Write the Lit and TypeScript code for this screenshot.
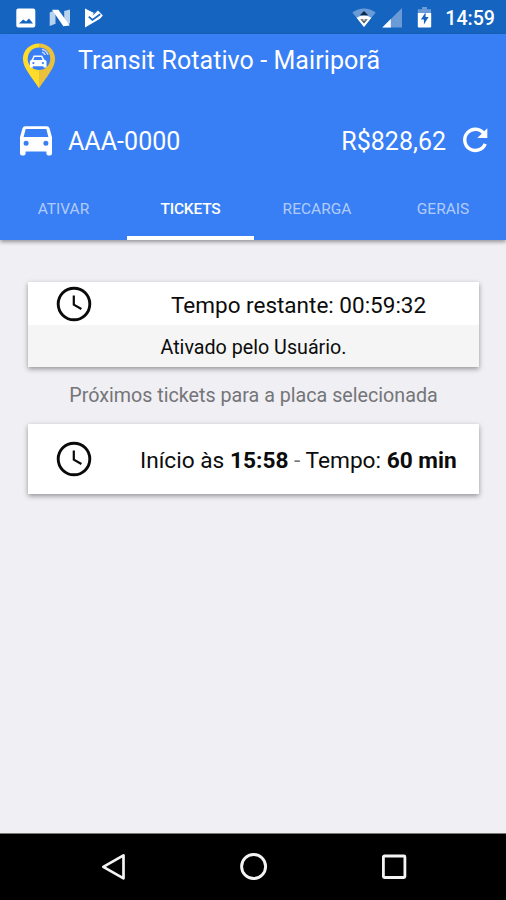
import { LitElement, html, css } from "lit";
import { customElement } from "lit/decorators.js";

const clock = html`<svg class="clock" viewBox="0 0 36 36"><circle cx="18" cy="18" r="15.8" fill="none" stroke="#0a0a0a" stroke-width="2.9"/><path d="M17.8 9.5V18.6L25.4 23" fill="none" stroke="#0a0a0a" stroke-width="2.2"/></svg>`;

const picture = html`<svg width="20" height="20" viewBox="0 0 20 20" fill="#fff"><path fill-rule="evenodd" d="M2.3.4h15a2 2 0 0 1 2 2v15a2 2 0 0 1-2 2h-15a2 2 0 0 1-2-2v-15a2 2 0 0 1 2-2zM3 15.600h14l-4-5.200-3 3.200-2.800-2.200z"/></svg>`;

const nougat = html`<svg width="22" height="18" viewBox="0 0 22 18"><path d="M.7 3.600 6.500 1v13.800L.7 17z" fill="#b9d2ee"/><path d="M15.200 2 21 .6v13.600l-5.800 2.600z" fill="#b9d2ee"/><path d="M3 .8h6.400L20.800 16.400l-6.400.9z" fill="#fff"/></svg>`;

const play = html`<svg width="20" height="20" viewBox="0 0 20 20"><path d="M1 .5 10 5 14 2.500 18.800 7.600 16 10.700 1 19.400z" fill="#fff"/><path d="M10 4.800 8.400 7.800l5.800-5.200z" fill="#1565c0"/><path d="m4.800 8.600 3.600 3.300 7.800-5.600" fill="none" stroke="#1565c0" stroke-width="1.700"/></svg>`;

const wifi = html`<svg width="24" height="20" viewBox="0 0 24 20"><path d="M.3 4.600Q12-3.800 23.700 4.600L12 19z" fill="#6a9bd6"/><path d="M4.600 9.800Q12 5.200 19.400 9.800L12 19z" fill="#fff"/><path d="m12 3 4.200 4.200H7.800z" fill="#12294a"/><path d="M8.300 11.300h7.400L12 15.500z" fill="#4c545e"/><path d="m12 11 1.800 1.600h-3.600z" fill="#fff"/></svg>`;

const signal = html`<svg width="20" height="20" viewBox="0 0 20 20"><path d="M20 0v19.500H.3z" fill="#6a9bd6"/><path d="M8.800 11v8.500H.3z" fill="#fff"/></svg>`;

const battery = html`<svg width="15" height="21" viewBox="0 0 15 21"><path d="M5 0h5v2.200h4V7H.800V2.200H5z" fill="#6a9bd6"/><path d="M.800 6h13.400v13.500a1 1 0 0 1-1 1H1.800a1 1 0 0 1-1-1z" fill="#fff"/><path d="M8.600 5.200 3.900 12.600h3v4.800l4.700-7.400h-3z" fill="#1565c0"/></svg>`;

const pin = html`<svg width="34" height="46" viewBox="0 0 34 46"><path d="M17 .5C7.700.5.900 7.500.900 15.800c0 4.600 2 8.500 4.300 12.200C9.500 35 13.500 40 17 45.300z" fill="#fddc2b"/><path d="M17 .5c9.300 0 16.100 7 16.100 15.300 0 4.600-2 8.500-4.300 12.200C24.500 35 20.500 40 17 45.300z" fill="#e9c13c"/><circle cx="17" cy="15.800" r="11.300" fill="#387ef5"/><path fill="#fff" fill-rule="evenodd" d="M11.600 12.400h8.600l2 4.200 2.300 1.500v6.400h-3v-1.200H10.900v1.200h-3v-6.400l1.900-1.500zm.9 1.500-1.200 3h9.200l-1.200-3z"/><circle cx="11.400" cy="20.100" r="1.100" fill="#387ef5"/><circle cx="20.900" cy="20.100" r="1.100" fill="#387ef5"/><path d="M20 6.400q4.600.8 6 5.400M20 9.200q2.500.5 3.300 2.900" fill="none" stroke="#c8dcfb" stroke-width="1.500"/></svg>`;

const car = html`<svg width="36" height="32" viewBox="0 0 36 32"><path fill="#fff" fill-rule="evenodd" d="M7.200 1.300h21.600a3 3 0 0 1 2.700 1.900L34 12.300V28.400a2 2 0 0 1-2 2h-1.600a2 2 0 0 1-2-2V26.500H7.600v1.900a2 2 0 0 1-2 2H4a2 2 0 0 1-2-2V12.300L4.500 3.200a3 3 0 0 1 2.700-1.900zM7.700 4 5.600 12h24.800L28.300 4zM8.100 15.800a2.500 2.500 0 1 0 0 5 2.500 2.500 0 0 0 0-5zm19.800 0a2.500 2.500 0 1 0 0 5 2.500 2.500 0 0 0 0-5z"/></svg>`;

const refresh = html`<svg width="28" height="28" viewBox="0 0 28 28"><path d="M22.900 7.600A10.600 10.600 0 1 0 24.200 17.800" fill="none" stroke="#fff" stroke-width="3.400"/><path d="M26.300 2.300V12h-10z" fill="#fff"/></svg>`;

@customElement("app-root")
class AppRoot extends LitElement {
  static styles = css`
    :host { display: flex; flex-direction: column; width: 506px; height: 900px; overflow: hidden; background: #efeff4; font-family: Roboto, sans-serif; color: #0c0c0c; }
    * { box-sizing: border-box; }
    svg { display: block; flex: none; }
    .status { height: 34px; background: #1565c0; flex: none; display: flex; align-items: center; padding: 1px 11px 0 16px; color: #fff; }
    .status .left { display: flex; align-items: center; flex: 1; gap: 13px; }
    .status .right { display: flex; align-items: center; }
    .signal { margin-left: 6px; }
    .battery { margin-left: 15px; }
    .time { margin-left: 13px; font-size: 19.6px; font-weight: 500; line-height: 24px; padding-top: 2px; }
    .header { height: 206px; background: #387ef5; color: #fff; flex: none; display: flex; flex-direction: column; box-shadow: 0 2px 4px rgba(0,0,0,.38); z-index: 1; }
    .title { height: 62px; display: flex; padding-left: 22px; }
    .title svg { margin-top: 9px; }
    .title span { margin: 12px 0 0 22px; font-size: 25px; letter-spacing: .08px; line-height: 30px; white-space: nowrap; }
    .account { height: 82px; display: flex; align-items: center; padding: 8px 17px 0 18px; font-size: 25px; line-height: 30px; }
    .account span { padding-top: 2px; }
    .account svg:last-child { margin-top: -2px; }
    .plate { margin-left: 14px; flex: 1; letter-spacing: .05px; }
    .money { margin-right: 15px; }
    .tabs { height: 62px; display: grid; grid-template-columns: 127px 127px 126px 126px; font-size: 15.5px; }
    .tab { display: flex; align-items: center; justify-content: center; padding: 3px 0 0; color: rgba(255,255,255,.62); border-bottom: 4px solid transparent; }
    .tab.active { color: #fff; border-color: #fff; font-weight: 500; letter-spacing: -.2px; }
    .content { flex: 1; padding: 42px 27px 0 28px; }
    .card { background: #fff; box-shadow: 0 2px 5px rgba(0,0,0,.38); white-space: nowrap; }
    .row { height: 43px; display: flex; align-items: center; padding: 1px 0 0 28px; font-size: 22.5px; }
    .row span { margin-left: 79px; padding-top: 1px; }
    .row.tall { height: 70px; font-size: 22.7px; white-space: pre; padding-top: 0; }
    .row.tall span { margin-left: 48px; padding-top: 2px; }
    .clock { width: 36px; height: 36px; }
    .note { height: 42px; background: #f5f5f5; text-align: center; font-size: 19.7px; line-height: 45px; }
    .caption { height: 57px; line-height: 57px; font-size: 19.7px; color: #757578; text-align: center; }
    .dash { color: #777; font-style: normal; }
    .nav { height: 67px; background: #000; flex: none; display: flex; align-items: center; padding: 0 98px 0 100px; justify-content: space-between; border-top: 1px solid #777; }
  `;
  render() {
    return html`
      <div class="status">
        <div class="left">${picture}${nougat}${play}</div>
        <div class="right">${wifi}<div class="signal">${signal}</div><div class="battery">${battery}</div><span class="time">14:59</span></div>
      </div>
      <div class="header">
        <div class="title">${pin}<span>Transit Rotativo - Mairiporã</span></div>
        <div class="account">${car}<span class="plate">AAA-0000</span><span class="money">R$828,62</span>${refresh}</div>
        <div class="tabs"><div class="tab">ATIVAR</div><div class="tab active">TICKETS</div><div class="tab">RECARGA</div><div class="tab">GERAIS</div></div>
      </div>
      <div class="content">
        <div class="card"><div class="row">${clock}<span>Tempo restante: 00:59:32</span></div><div class="note">Ativado pelo Usuário.</div></div>
        <div class="caption">Próximos tickets para a placa selecionada</div>
        <div class="card"><div class="row tall">${clock}<span>Início às <b>15:58</b><i class="dash"> - </i>Tempo: <b>60 min</b></span></div></div>
      </div>
      <div class="nav">
        <svg width="28" height="28" viewBox="0 0 28 28"><path d="M23.500 2.300v23L3.300 13.800z" fill="none" stroke="#f4f4f4" stroke-width="2.700" stroke-linejoin="round"/></svg>
        <svg width="28" height="28" viewBox="0 0 28 28"><circle cx="13.600" cy="13.500" r="12" fill="none" stroke="#f4f4f4" stroke-width="2.900"/></svg>
        <svg width="28" height="28" viewBox="0 0 28 28"><rect x="3.400" y="3" width="21.500" height="21.500" rx="1" fill="none" stroke="#f4f4f4" stroke-width="2.800"/></svg>
      </div>`;
  }
}
